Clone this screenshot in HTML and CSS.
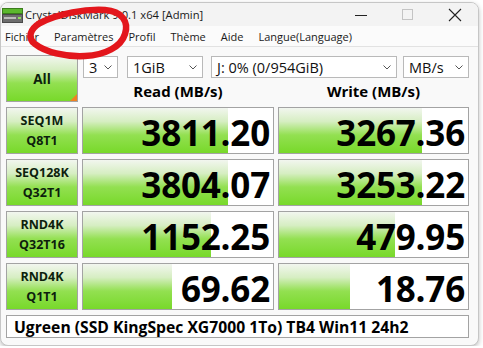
FILE: index.html
```html
<!DOCTYPE html>
<html lang="fr">
  <head>
    <meta charset="UTF-8" />
    <meta name="viewport" content="width=device-width, initial-scale=1.0" />
    <title>CrystalDiskMark 9.0.1 x64 [Admin]</title>
    <link rel="stylesheet" href="styles.css">
  </head>
  <body>
    <div class="window">
      <div class="titlebar">
        <svg class="appIcon" width="21" height="15" viewBox="0 0 21 15">
          <rect x="0.5" y="0.5" width="20" height="5" fill="#5cb82e" stroke="#3b7d1c" />
          <rect x="0.5" y="6.5" width="20" height="8" fill="#6d6d6d" stroke="#4a4a4a" />
          <rect x="2" y="9" width="12" height="2" fill="#bdbdbd" />
          <rect x="16" y="9" width="3" height="2" fill="#8fe05a" />
        </svg>
        <span class="title">CrystalDiskMark 9.0.1 x64 [Admin]</span>
        <div class="controls">
          <svg class="ctl" width="14" height="14" viewBox="0 0 14 14"><line x1="1" y1="7.5" x2="13" y2="7.5" stroke="#222" stroke-width="1" /></svg>
          <svg class="ctl" width="14" height="14" viewBox="0 0 14 14"><rect x="1.5" y="1.5" width="10" height="10" fill="none" stroke="#c4c4c4" stroke-width="1" /></svg>
          <svg class="ctl" width="14" height="14" viewBox="0 0 14 14"><path d="M1 1 L13 13 M13 1 L1 13" stroke="#222" stroke-width="1.1" /></svg>
        </div>
      </div>
      <div class="menubar">
        <span>Fichier</span>
        <span>Paramètres</span>
        <span>Profil</span>
        <span>Thème</span>
        <span>Aide</span>
        <span>Langue(Language)</span>
      </div>
      <div class="main">
        <div class="board">
          <div class="cell label all">All<span class="corner"></span></div>
          <div class="topRight">
            <div class="combos">
              <div class="combo c1"><span>3</span><svg width="8" height="5" viewBox="0 0 8 5"><polyline points="0.5,0.5 4,4 7.5,0.5" fill="none" stroke="#555" /></svg></div>
              <div class="combo c2"><span>1GiB</span><svg width="8" height="5" viewBox="0 0 8 5"><polyline points="0.5,0.5 4,4 7.5,0.5" fill="none" stroke="#555" /></svg></div>
              <div class="combo c3"><span>J: 0% (0/954GiB)</span><svg width="8" height="5" viewBox="0 0 8 5"><polyline points="0.5,0.5 4,4 7.5,0.5" fill="none" stroke="#555" /></svg></div>
              <div class="combo c4"><span>MB/s</span><svg width="8" height="5" viewBox="0 0 8 5"><polyline points="0.5,0.5 4,4 7.5,0.5" fill="none" stroke="#555" /></svg></div>
            </div>
            <div class="heads">
              <div>Read (MB/s)</div>
              <div>Write (MB/s)</div>
            </div>
          </div>

          <div class="cell label">SEQ1M<br>Q8T1</div>
          <div class="cell value" style="--w:145px">3811.20</div>
          <div class="cell value" style="--w:143px">3267.36</div>

          <div class="cell label">SEQ128K<br>Q32T1</div>
          <div class="cell value" style="--w:145px">3804.07</div>
          <div class="cell value" style="--w:143px">3253.22</div>

          <div class="cell label">RND4K<br>Q32T16</div>
          <div class="cell value" style="--w:128px">1152.25</div>
          <div class="cell value" style="--w:116px">479.95</div>

          <div class="cell label">RND4K<br>Q1T1</div>
          <div class="cell value" style="--w:89px">69.62</div>
          <div class="cell value" style="--w:71px">18.76</div>

          <div class="cell comment">Ugreen (SSD KingSpec XG7000 1To) TB4 Win11 24h2</div>
        </div>
      </div>
    </div>
    <svg class="annot" width="483" height="348" viewBox="0 0 483 348">
      <path d="M40 23 C60 13 85 9 105 10 C122 11 129 22 125 34 C121 47 105 55 85 56 C65 57 45 52 35 44 C27 38 30 29 40 23 Z" fill="none" stroke="#e3161c" stroke-width="6.5" stroke-linecap="round" stroke-linejoin="round" />
    </svg>
  </body>
</html>
```

FILE: styles.css
```css
body {
  margin: 0;
  background-color: #ffffff;
  font-family: "Open Sans", "Noto Sans", sans-serif;
  color: #000000;
}

.window {
  margin-top: 2px;
  width: 477px;
  height: 342px;
  border: 1px solid #c6c6c6;
  border-radius: 8px;
  background-color: #f9f9f9;
  box-shadow: 0 2px 5px rgba(0, 0, 0, 0.25);
  overflow: hidden;
}

.titlebar {
  height: 23px;
  display: flex;
  align-items: center;
  background-color: #f3f3f3;
}

.appIcon {
  margin-left: 1px;
  margin-top: 1px;
}

.title {
  margin-left: 2px;
  font-size: 11.2px;
  color: #1a1a1a;
}

.controls {
  margin-left: auto;
  display: flex;
  align-items: center;
}

.ctl {
  margin-right: 33px;
}

.ctl:last-child {
  margin-right: 16px;
}

.menubar {
  height: 20px;
  display: flex;
  align-items: center;
  padding-left: 4px;
  font-size: 11px;
  color: #1a1a1a;
  border-bottom: 1px solid #e2e2e2;
  background-color: #fbfbfb;
}

.menubar span {
  margin-right: 15px;
}

.main {
  padding: 8px 0 0 5px;
}

.board {
  display: grid;
  grid-template-columns: 72px 192px 191px;
  grid-template-rows: 47px 47px 47px 47px 47px 23px;
  column-gap: 4px;
  row-gap: 5px;
}

.cell {
  box-sizing: border-box;
  border: 1px solid #a3a3a3;
}

.label {
  display: flex;
  align-items: center;
  justify-content: center;
  text-align: center;
  font-size: 12.5px;
  font-weight: 700;
  line-height: 20px;
  color: #0d1f0d;
  background: linear-gradient(to bottom, #f2f6ef 0%, #d6eec2 30%, #93e051 60%, #78d92a 100%);
}

.all {
  position: relative;
  font-size: 13.5px;
  padding-top: 1px;
}

.corner {
  position: absolute;
  right: 0;
  bottom: 0;
  width: 0;
  height: 0;
  border-left: 7px solid transparent;
  border-bottom: 7px solid #f08122;
}

.topRight {
  grid-column: 2 / 4;
  display: flex;
  flex-direction: column;
}

.combos {
  display: flex;
  margin-top: 1px;
  height: 22px;
}

.combo {
  box-sizing: border-box;
  height: 22px;
  display: flex;
  align-items: center;
  justify-content: space-between;
  padding: 0 5px 0 5px;
  border: 1px solid #b9b9b9;
  background-color: #ffffff;
  font-size: 14.5px;
  color: #111111;
}

.c1 {
  width: 35px;
  margin-left: 1px;
}

.c2 {
  width: 76px;
  margin-left: 9px;
}

.c3 {
  width: 186px;
  margin-left: 8px;
}

.c4 {
  width: 66px;
  margin-left: 6px;
}

.heads {
  display: flex;
  flex: 1;
  align-items: center;
  padding-top: 2px;
  font-size: 15px;
  font-weight: 700;
  column-gap: 4px;
}

.heads div {
  width: 192px;
  text-align: center;
}

.heads div:last-child {
  width: 191px;
}

.value {
  display: flex;
  align-items: center;
  justify-content: flex-end;
  padding: 3px 3px 0 0;
  font-size: 35px;
  font-weight: 700;
  letter-spacing: -0.2px;
  background-color: #ffffff;
  background-image: linear-gradient(to bottom, #f2f6ef 0%, #d6eec2 30%, #93e051 60%, #78d92a 100%);
  background-size: var(--w) 100%;
  background-repeat: no-repeat;
}

.comment {
  grid-column: 1 / 4;
  display: flex;
  align-items: center;
  padding-left: 7px;
  font-size: 15.7px;
  font-weight: 700;
  background-color: #ffffff;
}

.annot {
  position: absolute;
  top: 0;
  left: 0;
  pointer-events: none;
}
```
